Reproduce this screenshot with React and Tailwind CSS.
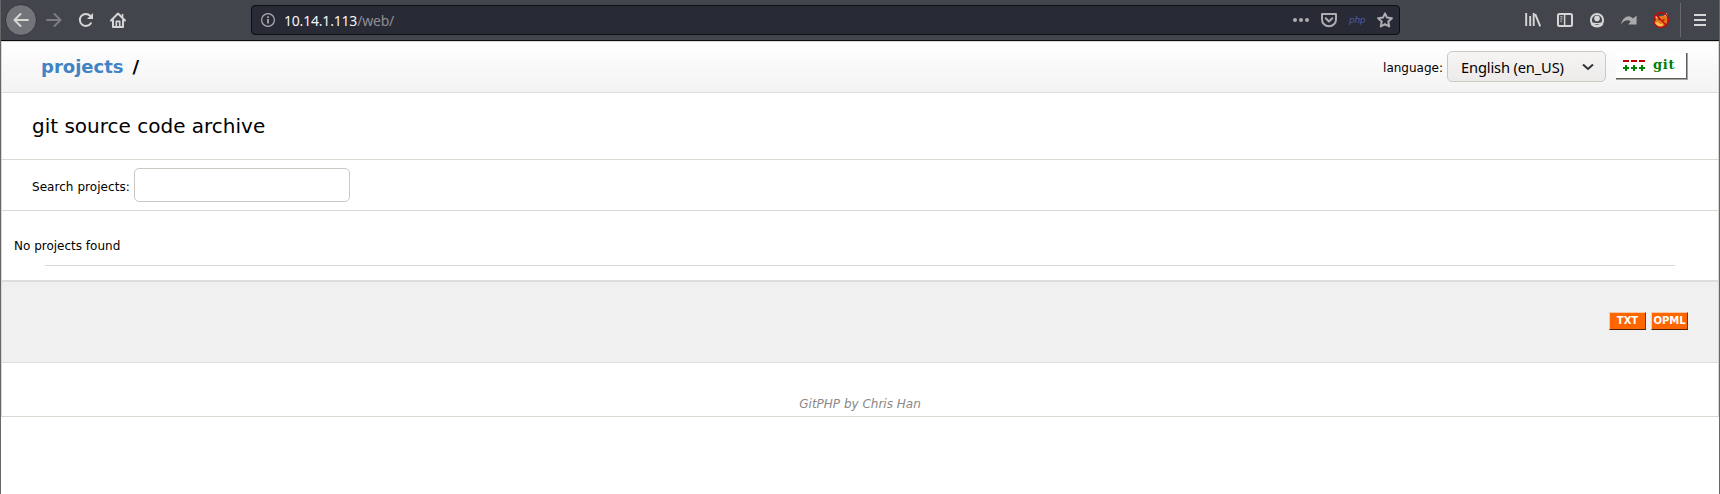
const dejavu = "font-['DejaVu_Sans',sans-serif]";

function IconSlot({ className, children }) {
  return <span className={`flex h-4 w-4 shrink-0 items-center justify-center ${className}`}>{children}</span>;
}

function Svg({ children, size = 16 }) {
  return (
    <svg width={size} height={size} viewBox="0 0 16 16" fill="none" stroke="currentColor" strokeWidth="2" strokeLinecap="round" strokeLinejoin="round" className="shrink-0">
      {children}
    </svg>
  );
}

function Toolbar() {
  return (
    <div className="flex h-[41px] items-center border-b border-[#0c0c0d] bg-[#43454d] pl-[4px] text-[#d6d6d5]">
      <button className="flex h-8 w-8 shrink-0 items-center justify-center rounded-full border border-[#33343a] bg-[#737479]">
        <Svg><path d="M15 8H1.5M7.5 2L1.5 8l6 6" /></Svg>
      </button>
      <IconSlot className="ml-[9px] text-[#7c7d83]">
        <Svg><path d="M1 8h13.5M8.5 2l6 6-6 6" /></Svg>
      </IconSlot>
      <IconSlot className="ml-4">
        <Svg>
          <path d="M12.9 11.2A6 6 0 1 1 12.2 3.8L14 5.8" />
          <path d="M15 1v6H9z" fill="currentColor" stroke="none" />
        </Svg>
      </IconSlot>
      <IconSlot className="ml-4">
        <Svg>
          <path d="M1 8.5L8 1.5l7 7M3 7.5V15h10V7.5" />
          <path d="M6.3 15V9.3h3.4V15M12.5 2.5v2" strokeWidth="1.7" />
        </Svg>
      </IconSlot>
      <div className="ml-[125px] flex h-[30px] w-[1149px] shrink-0 items-center rounded-[4px] border border-[#0e0f13] bg-[#282a36] pl-[9px] text-[#adadb2]">
        <svg width="14" height="14" viewBox="0 0 14 14" fill="none" stroke="currentColor" className="shrink-0">
          <circle cx="7" cy="7" r="6.4" strokeWidth="1.2" />
          <path d="M7 6v4.5M7 3.3v1.6" strokeWidth="1.7" />
        </svg>
        <div className="mt-px ml-[9px] flex-1 whitespace-nowrap font-['Noto_Sans',sans-serif] text-[14px] leading-5 tracking-[-0.2px] text-[#8d8e95]">
          <span className="text-[#f4f4f6]">10.14.1.113</span>/web/
        </div>
        <IconSlot>
          <svg width="16" height="4" viewBox="0 0 16 4" fill="currentColor"><circle cx="2" cy="2" r="2" /><circle cx="8" cy="2" r="2" /><circle cx="14" cy="2" r="2" /></svg>
        </IconSlot>
        <IconSlot className="ml-3">
          <Svg><path d="M1 2h14v5.5a7 6.8 0 0 1-14 0zM4.7 6.3L8 9.5l3.3-3.2" /></Svg>
        </IconSlot>
        <span className="ml-3 w-4 font-['DejaVu_Sans',sans-serif] text-[9px] leading-4 tracking-[-0.3px] text-[#4b5aa0] italic">php</span>
        <IconSlot className="mr-[6px] ml-3">
          <Svg><path d="M8 1.3l2 4.3 4.9.6-3.6 3.3.9 5L8 12.1l-4.2 2.4.9-5L1.1 6.2 6 5.6z" /></Svg>
        </IconSlot>
      </div>
      <IconSlot className="ml-[125px]">
        <svg width="16" height="16" viewBox="0 0 16 16" fill="none" stroke="currentColor" strokeWidth="1.9"><path d="M1.2 1v13M5.2 4v10M8.7 1v13M10.2 2.2l5 12.2" /></svg>
      </IconSlot>
      <IconSlot className="ml-4">
        <Svg>
          <rect x="1" y="2" width="14" height="12" rx="1.5" />
          <path d="M7.6 2v12" strokeWidth="1.5" />
          <path d="M3.3 4.8h2.2M3.3 7h2.2M3.3 9.2h1.7" strokeWidth="1" strokeLinecap="butt" />
        </Svg>
      </IconSlot>
      <IconSlot className="ml-4">
        <Svg>
          <circle cx="8" cy="8" r="6.1" />
          <circle cx="8" cy="6.4" r="2.8" fill="currentColor" stroke="none" />
          <path d="M3.3 9.7c1.1 1 2.9 1.3 4.7 1.3s3.6-.3 4.7-1.3L11.4 12.2H4.6z" fill="currentColor" stroke="none" />
          <path d="M3 12.5a7.4 7.4 0 0 0 10 0" />
        </Svg>
      </IconSlot>
      <IconSlot className="ml-4 text-[#a9a9ab]">
        <svg width="16" height="16" viewBox="0 0 16 16" fill="currentColor" className="shrink-0">
          <path d="M0 12C1.5 7 5.2 3.8 8.6 4.4c1.4.2 2.4 1 3.4 2L15.6 3.5V12.5H7.2L9.6 9.4C6.8 6.8 3 8.6 0 12z" />
        </svg>
      </IconSlot>
      <IconSlot className="ml-4">
        <svg width="16" height="16" viewBox="0 0 16 16" className="shrink-0">
          <path d="M2 2.8l3 2 3-.8 3.5-.5L14 1l1 4-1 6-4 3.5-5-.3L1 11l2-3z" fill="#e8761b" />
          <path d="M1 11l4-1 2 2 3-.5L9 15H5z" fill="#f5c55a" />
          <path d="M2.5 3.5L5 4.8 3 6.5zM11 3l2.8-1.8L14 5z" fill="#f4e7cc" />
          <path d="M5 7l2 .5M9.5 8.5l2-1" stroke="#4b2a16" strokeWidth="1.2" />
          <circle cx="8" cy="8" r="7.3" fill="none" stroke="#cc0707" strokeWidth="1.4" />
          <path d="M3 3l10 10" stroke="#cc0707" strokeWidth="1.4" />
        </svg>
      </IconSlot>
      <span className="mb-px ml-[11px] h-[34px] w-px bg-[#66686e]" />
      <IconSlot className="ml-[11px]">
        <svg width="16" height="16" viewBox="0 0 16 16" fill="none" stroke="currentColor" strokeWidth="2" className="shrink-0"><path d="M2 3h12M2 8h12M2 13h12" /></svg>
      </IconSlot>
    </div>
  );
}

function GitBadge() {
  return (
    <a className="ml-[10px] flex h-[27px] w-[72px] items-center border-r border-b border-[#a5a5a0] bg-white pl-[7px] shadow-[inset_-1px_-1px_0_#5d5d5a]">
      <svg width="23" height="12" viewBox="0 0 23 12" shapeRendering="crispEdges" className="shrink-0">
        <path d="M0 0h6v2H0zM8 0h6v2H8zM16 0h6v2h-6z" fill="#c00000" />
        <path d="M0 7h6v2H0zM2 5h2v6H2zM8 7h6v2H8zM10 5h2v6h-2zM16 7h6v2h-6zM18 5h2v6h-2z" fill="#008000" />
      </svg>
      <span className="mb-[2px] ml-[7px] font-['DejaVu_Serif',serif] text-[13px] leading-3 font-bold tracking-[0.7px] text-[#008000]">git</span>
    </a>
  );
}

function FeedButton({ children }) {
  return (
    <a className="flex h-[18px] w-[37px] items-center justify-center border border-[#ffc8a4] border-r-[#7d3302] border-b-[#4c1f02] bg-[#ff6600] text-[10px] leading-4 font-bold text-white">
      {children}
    </a>
  );
}

export default function App() {
  return (
    <div className={`h-[494px] w-[1720px] overflow-hidden bg-white text-[12px] text-black ${dejavu}`}>
      <div className="flex h-full flex-col border-x border-[#666666]">
        <Toolbar />
        <main className="h-[376px] border border-[#d9d8d1]">
          <header className="flex h-[51px] items-center justify-between border-b border-[#dddddd] bg-linear-to-b from-white to-[#f3f3f3] pr-[30px] pl-[39px]">
            <div className="mb-px text-[18px] leading-6 font-bold whitespace-pre">
              <a className="text-[#4183c4]">projects</a><span className="ml-[9px]">/</span>
            </div>
            <div className="mb-px flex items-center">
              <label className="mt-[2px] mr-[4px]">language:</label>
              <button className="flex h-[31px] w-[159px] items-center justify-between rounded-[5px] border border-[#cdc7c2] bg-linear-to-b from-[#f6f5f4] to-[#edebe9] pr-[11px] pl-[13px] font-['Noto_Sans',sans-serif] text-[14.67px] tracking-[-0.15px]">
                <span>English (en_US)</span>
                <svg width="12" height="8" viewBox="0 0 12 8" fill="none" stroke="#2e3436" strokeWidth="2"><path d="M1 1.5l5 4.5 5-4.5" /></svg>
              </button>
              <GitBadge />
            </div>
          </header>
          <h1 className="flex h-[67px] items-center border-b border-[#d9d8d1] pl-[30px] text-[20px]">git source code archive</h1>
          <form className="flex h-[51px] items-center border-b border-[#d9d8d1] pl-[30px]">
            <label className="mt-[3px] w-[102px] tracking-[0.05px]">Search projects:</label>
            <input className="mb-px h-[34px] w-[216px] rounded-[5px] border border-[#cdc7c2] bg-white" />
          </form>
          <section className="h-[69px] pt-[26px]">
            <p className="pl-3 leading-[18px]">No projects found</p>
            <div className="mx-[43px] mt-[10px] h-px bg-[#d9d8d5]" />
          </section>
          <footer className="flex h-[83px] items-center justify-end gap-[5px] border-t-2 border-b border-[#dddddd] bg-[#f0f0f0] pr-[30px] pb-[2px]">
            <FeedButton>TXT</FeedButton>
            <FeedButton>OPML</FeedButton>
          </footer>
          <div className="pt-[33px] text-center leading-4 text-[#888888] italic">GitPHP by Chris Han</div>
        </main>
      </div>
    </div>
  );
}
